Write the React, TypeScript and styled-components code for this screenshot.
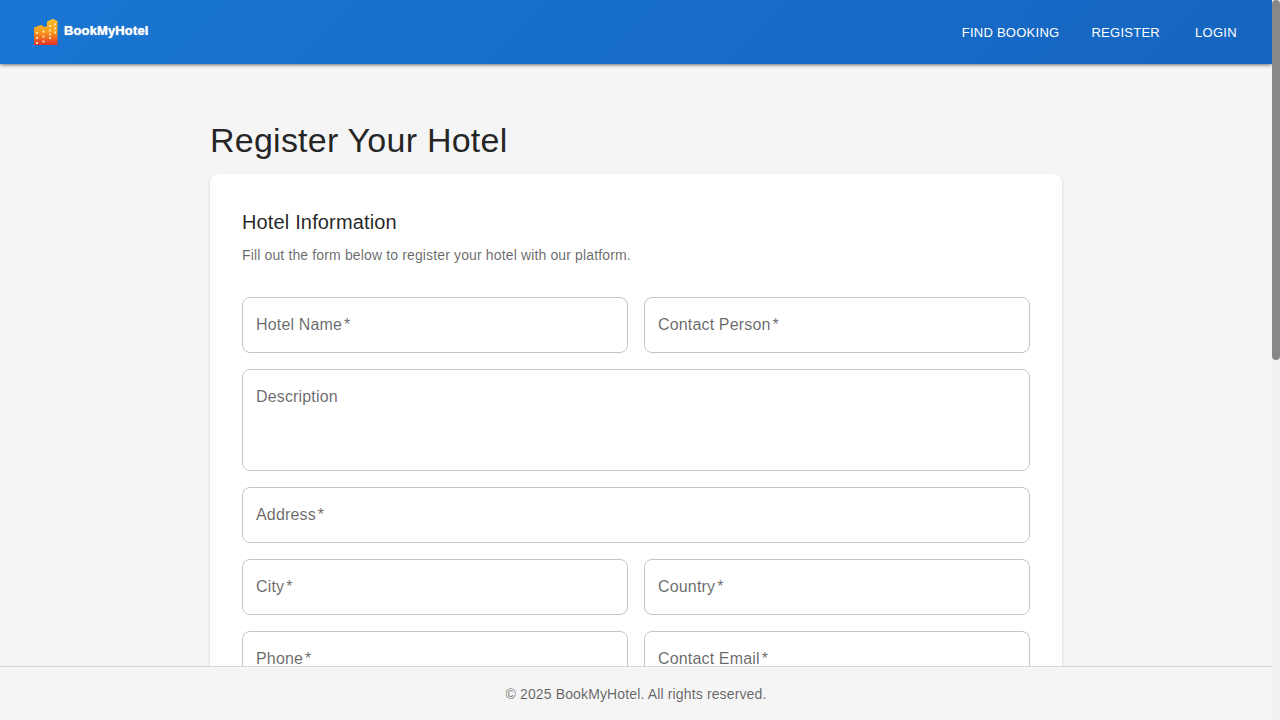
import React from 'react';
import styled, { createGlobalStyle } from 'styled-components';

const GlobalStyle = createGlobalStyle`
  *, *::before, *::after { box-sizing: border-box; }
  body {
    margin: 0;
    background: #f5f5f5;
    color: rgba(0, 0, 0, 0.87);
    font-family: "Liberation Sans", Helvetica, Arial, sans-serif;
    -webkit-font-smoothing: antialiased;
  }
`;

const Shell = styled.div`
  display: grid;
  grid-template-columns: minmax(0, 1fr) 8px;
  height: 100vh;
`;

const Page = styled.div`
  display: flex;
  flex-direction: column;
  min-height: 0;
  overflow: hidden;
`;

const Header = styled.header`
  display: flex;
  flex: none;
  align-items: center;
  justify-content: space-between;
  min-height: 64px;
  padding: 0 24px 0 32px;
  color: #fff;
  background: linear-gradient(135deg, #1976d2 0%, #1565c0 100%);
  box-shadow: 0 2px 4px -1px rgba(0, 0, 0, 0.2), 0 1px 3px 0 rgba(0, 0, 0, 0.4);
  z-index: 1;
`;

const Brand = styled.a`
  display: flex;
  align-items: center;
  gap: 4px;
  color: inherit;
  font-size: 13px;
  font-weight: 700;
  line-height: 28px;
  letter-spacing: 0.01em;
  text-decoration: none;
`;

const BrandName = styled.span`
  padding-bottom: 3px;
  text-shadow: 0 0 1px #fff;
`;

const Nav = styled.nav`
  display: flex;
  gap: 16px;
`;

const NavButton = styled.button`
  min-width: 64px;
  padding: 6px 8px 4px;
  border: 0;
  border-radius: 8px;
  background: transparent;
  color: inherit;
  font: inherit;
  font-size: 13px;
  line-height: 24px;
  letter-spacing: 0.02em;
  text-transform: uppercase;
  cursor: pointer;
`;

const Scroller = styled.div`
  flex: 1;
  min-height: 0;
  overflow-y: auto;
  scrollbar-width: none;
`;

const Main = styled.main`
  max-width: 900px;
  margin: 0 auto;
  padding: 56px 24px;
`;

const Title = styled.h1`
  margin: 0 0 14px;
  font-size: 34px;
  font-weight: 400;
  line-height: 40px;
  letter-spacing: 0.007em;
`;

const Card = styled.section`
  padding: 32px;
  border-radius: 8px;
  background: #fff;
  box-shadow: 0 1px 3px rgba(0, 0, 0, 0.12), 0 1px 2px rgba(0, 0, 0, 0.08);
`;

const CardTitle = styled.h2`
  margin: 0 0 7px;
  font-size: 20px;
  font-weight: 400;
  line-height: 32px;
  letter-spacing: 0.0075em;
`;

const Hint = styled.p`
  margin: 0 0 32px;
  color: rgba(0, 0, 0, 0.6);
  font-size: 14px;
  line-height: 20px;
  letter-spacing: 0.01em;
`;

const Form = styled.form`
  display: grid;
  grid-template-columns: repeat(2, minmax(0, 1fr));
  gap: 16px;
`;

const Field = styled.div<{ $wide?: boolean }>`
  position: relative;
  display: flex;
  grid-column: ${(p) => (p.$wide ? '1 / -1' : 'auto')};
`;

const Label = styled.label`
  position: absolute;
  top: 16px;
  left: 14px;
  color: rgba(0, 0, 0, 0.6);
  font-size: 16px;
  line-height: 23px;
  letter-spacing: 0.01em;
  pointer-events: none;
`;

const Required = styled.span`
  margin-left: 2px;
`;

const Control = styled.input`
  width: 100%;
  height: ${(p) => (p.as === 'textarea' ? '102px' : '56px')};
  padding: 16px 14px;
  border: 1px solid rgba(0, 0, 0, 0.23);
  border-radius: 8px;
  background: transparent;
  color: inherit;
  font: inherit;
  font-size: 16px;
  resize: none;

  &:focus {
    border-color: #1976d2;
    outline: none;
  }

  &:focus + label,
  &:valid:not(:placeholder-shown) + label {
    top: -11px;
    padding: 0 4px;
    background: #fff;
    font-size: 12px;
  }
`;

const Footer = styled.footer`
  display: flex;
  flex: none;
  align-items: center;
  justify-content: center;
  min-height: 54px;
  border-top: 1px solid rgba(0, 0, 0, 0.12);
  background: #f5f5f5;
  color: rgba(0, 0, 0, 0.6);
  font-size: 14px;
  line-height: 20px;
  letter-spacing: 0.01em;
  z-index: 1;
`;

const Rail = styled.div`
  background: #f1f1f1;
`;

const Thumb = styled.div`
  height: 50%;
  border-radius: 4px;
  background: #888;
`;

const WINDOW_COLUMNS = [
  { x: 4, rows: [14, 19, 24] },
  { x: 10.5, rows: [12.5, 17.5, 22.5] },
  { x: 17, rows: [7, 11.5, 15.5, 19] },
  { x: 22, rows: [5.5, 9.5, 13.5] },
];

function Logo() {
  return (
    <svg width="28" height="28" viewBox="0 0 28 28" aria-hidden="true">
      <defs>
        <linearGradient id="tower" x1="0" y1="0" x2="0" y2="1">
          <stop offset="0" stopColor="#fbc02d" />
          <stop offset="0.5" stopColor="#f99b1c" />
          <stop offset="1" stopColor="#e53127" />
        </linearGradient>
      </defs>
      <path d="M2 9.500 9 7 12.500 9 15 8V3.500L21 0.700 25.500 3V27H2Z" fill="url(#tower)" />
      {WINDOW_COLUMNS.map(({ x, rows }) =>
        rows.map((y) => (
          <rect key={`${x}-${y}`} x={x} y={y} width="2" height="2" fill="#ffecb3" fillOpacity="0.9" />
        )),
      )}
    </svg>
  );
}

const FIELDS = [
  { id: 'name', label: 'Hotel Name', required: true },
  { id: 'contact', label: 'Contact Person', required: true },
  { id: 'description', label: 'Description', wide: true, multiline: true },
  { id: 'address', label: 'Address', required: true, wide: true },
  { id: 'city', label: 'City', required: true },
  { id: 'country', label: 'Country', required: true },
  { id: 'phone', label: 'Phone', required: true },
  { id: 'email', label: 'Contact Email', required: true },
];

export default function App() {
  return (
    <>
      <GlobalStyle />
      <Shell>
        <Page>
          <Header>
            <Brand href="#">
              <Logo />
              <BrandName>BookMyHotel</BrandName>
            </Brand>
            <Nav>
              <NavButton type="button">Find Booking</NavButton>
              <NavButton type="button">Register</NavButton>
              <NavButton type="button">Login</NavButton>
            </Nav>
          </Header>
          <Scroller>
            <Main>
              <Title>Register Your Hotel</Title>
              <Card>
                <CardTitle>Hotel Information</CardTitle>
                <Hint>Fill out the form below to register your hotel with our platform.</Hint>
                <Form>
                  {FIELDS.map((f) => (
                    <Field key={f.id} $wide={f.wide}>
                      <Control
                        as={f.multiline ? 'textarea' : 'input'}
                        id={f.id}
                        required={f.required}
                        placeholder=" "
                      />
                      <Label htmlFor={f.id}>
                        {f.label}
                        {f.required && <Required>*</Required>}
                      </Label>
                    </Field>
                  ))}
                </Form>
              </Card>
            </Main>
          </Scroller>
          <Footer>© 2025 BookMyHotel. All rights reserved.</Footer>
        </Page>
        <Rail>
          <Thumb />
        </Rail>
      </Shell>
    </>
  );
}
